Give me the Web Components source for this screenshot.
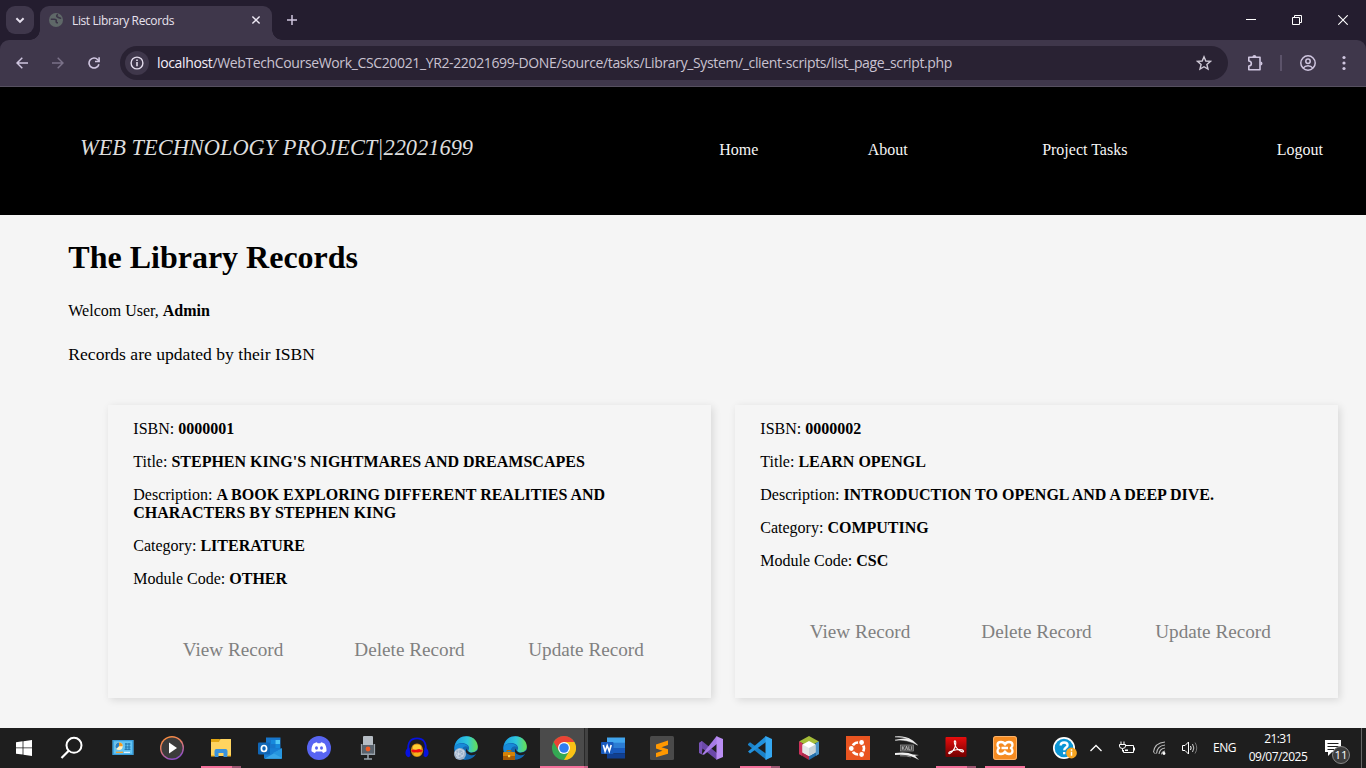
<!DOCTYPE html>
<html lang="en">
<head>
<meta charset="utf-8">
<title>List Library Records</title>
<style>
html,body{margin:0;height:100%;overflow:hidden;background:#f5f5f5}
</style>
</head>
<body>
<desktop-screen></desktop-screen>
<script>
const define = (name, html, init) => customElements.define(name, class extends HTMLElement {
  constructor() {
    super();
    const t = document.createElement('template');
    t.innerHTML = html;
    this.attachShadow({mode: 'open'}).append(t.content.cloneNode(true));
  }
  connectedCallback() { if (init) init(this); }
});

/* Text run stretched with letter-spacing to a given width. */
define('fit-text', `<style>:host{display:inline-block;white-space:pre}span{display:inline-block}</style><span><slot></slot></span>`, el => {
  const s = el.shadowRoot.querySelector('span');
  const n = el.textContent.length;
  const w = s.getBoundingClientRect().width;
  if (w) s.style.letterSpacing = ((+el.getAttribute('w') - w) / n) + 'px';
});

const ICONS = {
  down: ['0 0 28 28', 28, '<path d="M10.4 12.3 14 15.9l3.6-3.6" fill="none" stroke="#e6e0ee" stroke-width="2"/>'],
  globe: ['0 0 14 14', 14, '<circle cx="7" cy="7" r="7" fill="#5f6868"/><path d="M1.800 6.200h3.400c1.800 0 2.400.8 2 2.100-.3 1.200.6 1.400 1.800 1.400M9 1.500C7.400 2.100 7.300 3.500 8.600 4c1.200.5 1.600 1.300 3.600 1.200" fill="none" stroke="#3b3447" stroke-width="1.600"/>'],
  close: ['0 0 10 10', 10, '<path d="M1.4 1.4l7.2 7.2M8.6 1.4 1.4 8.6" stroke="#eee9f5" stroke-width="1.4"/>'],
  plus: ['0 0 12 12', 12, '<path d="M6 1v10M1 6h10" stroke="#d0c6e0" stroke-width="1.5"/>'],
  min: ['0 0 10 10', 10, '<path d="M0 4.5h10" stroke="#fff"/>'],
  restore: ['0 0 10 10', 10, '<path d="M.5 2.5h7v7h-7zM2.5 2.500V.5h7v7H7.500" fill="none" stroke="#fff"/>'],
  wclose: ['0 0 10 10', 10, '<path d="M.3.3l9.400 9.400M9.700.3.3 9.700" stroke="#fff" stroke-width="1.100"/>'],
  back: ['0 0 12 12', 12, '<path d="M12 6H1M6.300.7 1 6l5.300 5.300" fill="none" stroke="#d0c6e0" stroke-width="1.500"/>'],
  fwd: ['0 0 12 12', 12, '<path d="M0 6h11M5.700.7 11 6l-5.300 5.300" fill="none" stroke="#7b7289" stroke-width="1.500"/>'],
  reload: ['0 0 12 12', 12, '<path d="M10.900 7.200A5 5 0 1 1 9.800 2.700L11 4" fill="none" stroke="#d0c6e0" stroke-width="1.600"/><path d="M11.900.2v5H7V3.700h3.300V.2z" fill="#d0c6e0"/>'],
  info: ['0 0 24 24', 24, '<circle cx="12" cy="12" r="12" fill="#3f374b"/><circle cx="12" cy="12" r="5.900" fill="none" stroke="#e3dcec" stroke-width="1.400"/><path d="M12 11v4.300M12 8.400v1.500" stroke="#e3dcec" stroke-width="1.600"/>'],
  star: ['0 0 16 16', 16, '<path d="M8 1.800 9.800 6l4.700.4-3.600 3.100 1.100 4.600L8 11.700l-4 2.400 1.100-4.600L1.500 6.400 6.200 6z" fill="none" stroke="#cfc9d6" stroke-width="1.400"/>'],
  ext: ['0 0 18 18', 18, '<path d="M2.800 3.300H14v12.400H2.800v-3.600c3.400-.2 3.400-4.900 0-5.100z" fill="none" stroke="#d0c6e0" stroke-width="1.600" stroke-linejoin="round"/><path d="M6.400 3a2 2 0 0 1 4 0zM14.500 7.400a2 2 0 0 1 0 4z" fill="#d0c6e0"/>'],
  user: ['0 0 16 16', 16, '<g fill="none" stroke="#d0c6e0" stroke-width="1.500"><circle cx="8" cy="8" r="7.200"/><circle cx="8" cy="6.300" r="2.200"/><path d="M3.200 13.100c2.300-3 7.300-3 9.600 0"/></g>'],
  dots: ['0 0 4 16', 4, '<g fill="#d0c6e0"><circle cx="2" cy="2.500" r="1.600"/><circle cx="2" cy="8" r="1.600"/><circle cx="2" cy="13.500" r="1.600"/></g>'],
  /* taskbar */
  win: ['0 0 24 24', 24, '<path d="M4 6.300 10.600 5.300v6.200H4zM11.400 5.200 20 4v7.500h-8.600zM4 12.300h6.600v6.300L4 17.700zM11.400 12.300H20V20l-8.600-1.200z" fill="#fff"/>'],
  search: ['0 0 24 24', 24, '<circle cx="14" cy="9.300" r="7.500" fill="none" stroke="#fff" stroke-width="2"/><path d="M8.700 14.700 1.500 22" stroke="#fff" stroke-width="2.200"/>'],
  panel: ['0 0 24 24', 24, '<rect x="1.500" y="4" width="21" height="15" fill="#63c3f3"/><rect x="2.200" y="4.700" width="19.600" height="13.600" fill="none" stroke="#2d94d6"/><circle cx="8" cy="10.200" r="3.700" fill="#fff2c7"/><path d="M8 10.200V6.500a3.700 3.700 0 0 0-2.600 6.300z" fill="#2880c5"/><path d="M8 10.200V6.500a3.700 3.700 0 0 1 3.700 3.700z" fill="#f49b1f"/><path d="M14 8h5.500M14 11h5.500M13.500 13.300h6M15 7v7M18 7v7" stroke="#1f74ae"/><path d="M5 16.300h7" stroke="#f5a12d" stroke-width="1.300"/><path d="M13 16.300h6" stroke="#fff"/>'],
  media: ['0 0 24 24', 24, '<defs><linearGradient id="a" x2=".4" y2="1"><stop stop-color="#ff922f"/><stop offset=".5" stop-color="#e77d69"/><stop offset="1" stop-color="#8f4fc5"/></linearGradient></defs><circle cx="12" cy="12" r="12" fill="url(#a)"/><circle cx="12" cy="12" r="10.600" fill="#3c3c3c"/><path d="M9 6.500v11l8-5.500z" fill="#fff"/>'],
  folder: ['0 0 24 24', 24, '<path d="M2 4.500h8l1.500-1.500H22v17H2z" fill="#ffd45f"/><path d="M2 3h9l-1 3H2z" fill="#e4a813"/><path d="M5.500 21v-6q0-2 2-2h9q2 0 2 2v6h-4v-4h-5v4z" fill="#3992dd"/><path d="M2 19h3.500v1.500H2zM18.500 19H22v1.500h-3.500z" fill="#f7b928"/>'],
  outlook: ['0 0 24 24', 24, '<path d="M8 1.500h14.500v13H8z" fill="#1776cb"/><path d="M13 4h4.500v4H13zM17.500 8H22v4h-4.500z" fill="#1689dd"/><path d="M17.500 4H22v4h-4.500z" fill="#50c8f7"/><path d="M6 12l18 .5v9.500q0 .8-1 .8H7q-1 0-1-.8z" fill="#187ed3"/><path d="M6.500 22.700 24 12.500v9.300q0 1-1 1z" fill="#38a6e8"/><path d="M15 17 24 12.500V22z" fill="#2696df"/><rect y="6.500" width="12" height="12" rx="1" fill="#1066b6"/><ellipse cx="6" cy="12.500" rx="2.600" ry="3" fill="none" stroke="#fff" stroke-width="1.700"/>'],
  discord: ['0 0 24 24', 24, '<circle cx="12" cy="12" r="12" fill="#5865f2"/><path d="M8.300 6.700 10 6.300l.5 1h3l.5-1 1.700.4 2 1c1.400 2.300 2 4.500 1.800 7.500-1.200.9-2.200 1.400-3.500 1.800l-.9-1.500H8.900L8 17c-1.300-.4-2.300-.9-3.500-1.800-.2-3 .4-5.200 1.800-7.500z" fill="#fff"/><ellipse cx="9.500" cy="12" rx="1.500" ry="1.700" fill="#5865f2"/><ellipse cx="14.500" cy="12" rx="1.500" ry="1.700" fill="#5865f2"/>'],
  mic: ['0 0 24 24', 24, '<rect x="7" width="10" height="11" rx="1" fill="#b6bdc4"/><path d="M7 9h10v8q0 1-1 1H8q-1 0-1-1z" fill="#59636e"/><path d="M5.700 8v10.300h12.600V8" fill="none" stroke="#98a2ab" stroke-width="1.600"/><circle cx="12" cy="13" r="2.400" fill="#f15a22"/><path d="M12 19v4M8 23h8" stroke="#98a2ab" stroke-width="1.600"/>'],
  audacity: ['0 0 24 24', 24, '<path d="M5.800 14.500Q6.500 7.500 12 7.500t6.200 7q-1 6.500-6.200 6.500t-6.200-6.500z" fill="#d98a14"/><ellipse cx="12" cy="12" rx="4.300" ry="3.400" fill="#ffd034"/><ellipse cx="12" cy="18" rx="3.500" ry="2" fill="#f3b41e"/><path d="M5.800 15q2-1.800 3.200-1.400 1.400.5 3 0 2-1.200 3-.4t3.200 1.500q-2.200 1.600-4 1.200-1.600.9-3 .4-3 .6-5.400-1.300z" fill="#f10b12"/><path d="M3.200 14Q2.500 2.300 12 2.300T20.800 14" fill="none" stroke="#0712df" stroke-width="1.800"/><path d="M.5 16Q1 12 4.500 11.500l1 8.500-2 1.200Q0 20 .5 16zM23.500 16Q23 12 19.500 11.500l-1 8.500 2 1.200q3.500-1.200 3-5.200z" fill="#0712df"/>'],
  edge: ['0 0 24 24', 24, '<defs><linearGradient id="b"><stop stop-color="#1b9de2"/><stop offset=".55" stop-color="#30c8dc"/><stop offset="1" stop-color="#68df4e"/></linearGradient></defs><circle cx="12" cy="12" r="11.700" fill="#1268b2"/><path d="M.5 11C2 3 7 .2 12.500.2 20 .2 24 6 23.800 11c-.2 4.500-5 6-8 5.200-2-.6-1.800-1.500-.8-3.200C16 9 11 6.500 7 7Q2.500 7.500.5 11z" fill="url(#b)"/><path d="M.5 11C4 6 12 6.500 14 11q-4-2-6 2-2 6 4 10.500Q-.5 23 .5 11z" fill="#178ad9"/><path d="M12.500 12.500q-2 5 3.500 6.500 4 .8 7.500-1.500l.5.500V14q-4 3.500-8 2.500-3-.8-3.500-4z" fill="#1e1e1e"/>'],
  ball: ['0 0 24 24', 24, '<circle cx="6" cy="18" r="6" fill="#9eb2ca"/><path d="M1 16l4-3 5 2-1 5-5 2zM5 13l-1 9M1 16l8 4M10 15l-8 5" fill="none" stroke="#dbe4ef" stroke-width=".6"/>'],
  brief: ['0 0 24 24', 24, '<rect y="16" width="12" height="8" rx=".8" fill="#d48208"/><path d="M4 16v-1.500h4V16" fill="none" stroke="#b76a05"/><path d="M0 20h12v4H0z" fill="#a65a05"/><rect x="5" y="19" width="2.200" height="2.200" fill="#ffd24a"/>'],
  chrome: ['0 0 24 24', 24, '<circle cx="12" cy="12" r="12" fill="#34a853"/><path d="M1.600 6A12 12 0 0 1 22.400 6H12L7 15z" fill="#ea4335"/><path d="M12 6H22.400A12 12 0 0 1 12 24L17.200 15z" fill="#fbc116"/><circle cx="12" cy="12" r="6" fill="#fff"/><circle cx="12" cy="12" r="4.800" fill="#2f7df1"/>'],
  word: ['0 0 24 24', 24, '<path d="M6 1.500h18V7H6z" fill="#41a5ee"/><path d="M6 6.700h18V12H6z" fill="#2b7cd3"/><path d="M6 12h18v5.300H6z" fill="#185abd"/><path d="M6 17.300h18v5.200H6z" fill="#103f91"/><rect y="6" width="12.500" height="12" rx="1" fill="#185abd"/><path d="M2.300 9l1.800 6.300L6.200 9.500l2.100 5.800L10.200 9" fill="none" stroke="#fff" stroke-width="1.600"/>'],
  sublime: ['0 0 24 24', 24, '<rect width="24" height="24" rx="1.500" fill="#4a4a4a"/><path d="M6 8.500 18 4.500V9l-6.500 2.200L18 13.300v4.500L6 21.200V17l6.500-2.200L6 12.500z" fill="#ff9800"/>'],
  vs: ['0 0 24 24', 24, '<path d="M0 7 3 5 18 17v7L3.500 12.500 3 16.500 0 17z" fill="#6b49a9"/><path d="M0 7 3 5v13.500L0 17z" fill="#7953b8"/><path d="M3 18.500 17.500.3 19 1v6L5 18.700z" fill="#a77be6"/><path d="M17.500.3 24 3v18l-6.500 2.700z" fill="#b98df2"/>'],
  code: ['0 0 24 24', 24, '<path d="M0 8l2-1.800L18.500 18v6L0 9z" fill="#1b82c9"/><path d="M0 15.500 18 0v6L2 17.500z" fill="#2291dc"/><path d="M17.500 0 24 3v18l-6.500 3z" fill="#35a8f2"/>'],
  netbeans: ['0 0 24 24', 24, '<path d="M12 0 22 5.500 12 11 2 5.500z" fill="#a4bc37"/><path d="M2 5.500 12 11v13L2 18z" fill="#ae294b"/><path d="M22 5.500 12 11v13l10-6z" fill="#2370ac"/><path d="M2 5.500l3 1.600V19.700L2 18z" fill="#cd315b"/><path d="M22 5.500 19 7v12.700l3-1.700z" fill="#4c94c9"/><path d="M12 5l6.500 3.500v8L12 20l-6.500-3.500v-8z" fill="#fff"/><path d="M5.500 8.500 12 12v8l-6.500-3.500z" fill="#e2e7e7"/><path d="M12 12l6.500-3.500v8L12 20z" fill="#c7d2d7"/>'],
  ubuntu: ['0 0 24 24', 24, '<rect width="24" height="24" fill="#e95420"/><circle cx="12" cy="12.500" r="6" fill="none" stroke="#fff" stroke-width="2.600"/><g fill="#fff" stroke="#e95420" stroke-width="1.200"><circle cx="5.300" cy="12.500" r="3"/><circle cx="15.600" cy="6.500" r="3"/><circle cx="15.600" cy="18.500" r="3"/></g>'],
  kali: ['0 0 24 24', 24, '<path d="M0 .8Q14-.8 22.500 9 12 3 0 4.200 9 2.200 14 3.200 8 .8 0 .8z" fill="#f0f0f0" stroke="#f0f0f0" stroke-width=".5"/><rect x="5.500" y="9" width="13" height="6" fill="#444" stroke="#aaa" stroke-width=".6"/><path d="M7.300 10.200v3.600M9.600 10.200l-2 1.800 2 1.800M10.500 13.800l1-3.600 1.100 3.600M13.800 10.200v3.600h1.600M16.700 10.200v3.600" fill="none" stroke="#ddd" stroke-width=".7"/><path d="M0 17Q12 15.500 18 18.500l6 .5-4 .7 4 4.300Q14 17.500 0 19z" fill="#f0f0f0"/><path d="M5 19.800q7-.3 11 1.200" fill="none" stroke="#bbb" stroke-width=".7"/>'],
  pdf: ['0 0 24 24', 24, '<defs><linearGradient id="c" x2="0" y2="1"><stop stop-color="#e80d0d"/><stop offset="1" stop-color="#730000"/></linearGradient></defs><rect x="1.500" y="1" width="21" height="20" rx="1" fill="url(#c)"/><path d="M10.500 5c1.800-.8 1.500 3 .5 6S6.500 18.300 5 17.500s3-3 7.500-3.700 7.500.4 7 1.700-4.500-.5-6.800-3.500-2.700-6.500-2.200-7z" fill="none" stroke="#fff" stroke-width="1.100"/>'],
  xampp: ['0 0 24 24', 24, '<rect width="24" height="24" rx="3" fill="#f58b21"/><rect x=".5" y=".5" width="23" height="23" rx="2.500" fill="none" stroke="#fbb269"/><path d="M12 8.500Q11 6 8 6 4.500 6 4.500 9q0 2 1.700 3-1.700 1-1.700 3 0 3 3.500 3 3 0 4-2.500 1 2.500 4 2.500 3.500 0 3.500-3 0-2-1.700-3 1.700-1 1.700-3 0-3-3.500-3-3 0-4 2.500zM8.500 12h6.500" fill="none" stroke="#fff" stroke-width="2.300" stroke-linejoin="round"/>'],
  help: ['0 0 24 24', 24, '<circle cx="11" cy="12" r="11" fill="#fff"/><circle cx="11" cy="12" r="9.300" fill="#0c96d5"/><path d="M7.600 9.500q.2-3 3.500-3 3.500 0 3.500 2.700c0 2.300-3.400 2.300-3.400 5M11.200 16v2.200" fill="none" stroke="#fff" stroke-width="2.300"/><circle cx="18.500" cy="17" r="5.400" fill="#f7a521"/><path d="M18.500 15.800v4M18.500 13.300v1.500" stroke="#fff" stroke-width="1.500"/>'],
  up: ['0 0 12 12', 12, '<path d="M.5 9 6 3.500 11.500 9" fill="none" stroke="#fff" stroke-width="1.300"/>'],
  batt: ['0 0 18 14', 18, '<path d="M7.500 4.500H15.500v7h-10V9M16.500 6.500v3M3 .5v3M6 .5v3M1.500 3.500h6V5q0 2.500-3 2.500T1.500 5zM4.500 7.500v3" fill="none" stroke="#fff"/><path d="M7 8.500h3V10H7z" fill="#fff"/>'],
  wifi: ['0 0 16 16', 16, '<g fill="none" stroke="#bbb" stroke-width="1.100"><path d="M1.500 12Q2.500 3 13 2M4.500 13.500Q5 6 13 5M7 14Q7.500 8.800 13 8M9.500 14.300Q10 11.500 13 11"/></g><circle cx="12" cy="13.500" r="1.400" fill="#fff"/><path d="M1.500 12l2 2" stroke="#bbb"/>'],
  vol: ['0 0 18 16', 18, '<g fill="none" stroke="#fff"><path d="M1.500 5.500h2.500L7.500 2v12L4 10.500H1.500z"/><path d="M9.500 6q1.300 2 0 4"/><path d="M11.500 4q2.700 4 0 8" stroke="#ccc"/><path d="M14 2.500q3.500 5.500 0 11" stroke="#777"/></g>'],
  note: ['0 0 18 18', 18, '<path d="M1 1h16v12H8l-4 4v-4H1z" fill="#fff"/><path d="M3.500 4.500h11M3.500 7.500h11M3.500 10.500h7" stroke="#1e1e1e"/>']
};
define('line-icon', `<style>:host{display:block;flex:none;line-height:0}svg{display:block}</style><div></div>`, el => {
  const [vb, w, body] = ICONS[el.getAttribute('name')];
  const [, , a, b] = vb.split(' ').map(Number);
  el.shadowRoot.querySelector('div').innerHTML = `<svg viewBox="${vb}" width="${w}" height="${w * b / a}">${body}</svg>`;
});

define('tab-strip', `<style>
:host{display:flex;height:40px;background:#241d2f;font:12px "Open Sans",sans-serif;color:#e8e2ee}
.drop{width:28px;height:28px;margin:6px 6px 0;border-radius:9px;background:#3f374b}
.tab{position:relative;display:flex;align-items:center;box-sizing:border-box;width:232px;height:34px;margin-top:6px;padding:0 11px 6px 9px;border-radius:9px 9px 0 0;background:#3f374b}
.tab:before,.tab:after{content:"";position:absolute;bottom:0;width:10px;height:10px;background:radial-gradient(circle at 0 0,transparent 9.500px,#3f374b 10px)}
.tab:before{left:-10px}.tab:after{right:-10px;transform:scaleX(-1)}
fit-text{margin-left:9px;flex:1}
.plus{margin:14px 0 0 14px}
.win{margin-left:auto;display:flex;align-items:center}
.win div{width:46px;display:flex;justify-content:center}
</style><line-icon class="drop" name="down"></line-icon><div class="tab"><line-icon name="globe"></line-icon><fit-text w="102">List Library Records</fit-text><line-icon name="close"></line-icon></div><line-icon class="plus" name="plus"></line-icon>
<div class="win"><div><line-icon name="min"></line-icon></div><div><line-icon name="restore"></line-icon></div><div><line-icon name="wclose"></line-icon></div></div>`);

define('tool-bar', `<style>
:host{display:block;background:#241d2f}
.bar{display:flex;align-items:center;box-sizing:border-box;height:47px;padding:0 20px 1px 16px;background:#3f374b;border-bottom:1px solid #565060;border-radius:9px 9px 0 0}
.n{margin-right:24px}.r{margin-right:20px}
.url{flex:1;display:flex;align-items:center;box-sizing:border-box;height:34px;padding:0 16px 0 5px;border-radius:17px;background:#292233;font:14px "Open Sans",sans-serif;color:#c9c2d1}
.url fit-text{margin-left:8px;flex:1}
b{font-weight:400;color:#f3eef8}
.ext{margin-left:18px}.sep{width:2px;height:16px;margin:0 18px 0 16px;background:#5c536a}.dots{margin-left:26px}
</style><div class="bar"><line-icon class="n" name="back"></line-icon><line-icon class="n" name="fwd"></line-icon><line-icon class="r" name="reload"></line-icon>
<div class="url"><line-icon name="info"></line-icon><fit-text w="795"><b>localhost</b>/WebTechCourseWork_CSC20021_YR2-22021699-DONE/source/tasks/Library_System/_client-scripts/list_page_script.php</fit-text><line-icon name="star"></line-icon></div>
<line-icon class="ext" name="ext"></line-icon><div class="sep"></div><line-icon name="user"></line-icon><line-icon class="dots" name="dots"></line-icon></div>`);

define('site-header', `<style>
:host{display:flex;height:128px;box-sizing:border-box;padding:48px 43px 0 80px;background:#000;justify-content:space-between;align-items:flex-start}
em{font-size:22.400px;line-height:26px;color:#ddd}
nav{display:flex;font-size:16px;line-height:18px;color:#f5f5f5;padding-top:6px}
span{margin-left:var(--g)}
</style><em>WEB TECHNOLOGY PROJECT|22021699</em><nav><span>Home</span><span style="--g:109.400px">About</span><span style="--g:134.500px">Project Tasks</span><span style="--g:149.400px">Logout</span></nav>`);

define('record-card', `<style>
:host{display:block;box-sizing:border-box;padding:15px 25px;background:#f5f5f5;box-shadow:2px 2px 8px rgba(0,0,0,.12);font-size:16px;line-height:18px}
::slotted(p){margin:0 0 15px!important;padding-left:.3px}
.act{display:grid;grid-template-columns:repeat(3,176.500px);justify-content:center;margin-top:51px;text-align:center;font-size:19.200px;line-height:22px;color:#808080}
</style><slot></slot><div class="act"><span>View Record</span><span>Delete Record</span><span>Update Record</span></div>`);

define('library-page', `<style>
:host{display:block;flex:1;background:#f5f5f5;color:#000;font-family:"Liberation Serif",serif;min-height:0}
main{padding:0 28px 0 68px}
h1{margin:0;padding:24px 0 0 .3px;font-size:32px;line-height:37px}
.w{margin:26px 0 0;padding-left:.3px;font-size:16px;line-height:18px}
.i{margin:24px 0 0;padding-left:.3px;font-size:17.600px;line-height:20px}
.g{display:grid;grid-template-columns:1fr 1fr;gap:24px;height:293px;margin:41px 0 0 40px}
</style><site-header></site-header><main><h1>The Library Records</h1><p class="w">Welcom User, <b>Admin</b></p><p class="i">Records are updated by their ISBN</p>
<div class="g"><record-card><p>ISBN: <b>0000001</b></p><p>Title: <b>STEPHEN KING'S NIGHTMARES AND DREAMSCAPES</b></p><p>Description: <b>A BOOK EXPLORING DIFFERENT REALITIES AND CHARACTERS BY STEPHEN KING</b></p><p>Category: <b>LITERATURE</b></p><p>Module Code: <b>OTHER</b></p></record-card>
<record-card><p>ISBN: <b>0000002</b></p><p>Title: <b>LEARN OPENGL</b></p><p>Description: <b>INTRODUCTION TO OPENGL AND A DEEP DIVE.</b></p><p>Category: <b>COMPUTING</b></p><p>Module Code: <b>CSC</b></p></record-card></div></main>`);

/* One taskbar button: state is "open", "one" or "active"; over is a small overlay icon. */
define('task-item', `<style>
:host{position:relative;display:flex;flex:none;width:49px;height:40px;align-items:center;justify-content:center}
:host([name=win]){width:48px}
:host([name=search]){width:50.500px;box-sizing:border-box;padding-right:2.500px}
:host([state]):after{content:"";position:absolute;left:4.500px;bottom:0;width:40px;height:2px;background:linear-gradient(90deg,#f4709b 31px,#9b5470 31px)}
:host([state=one]):after{background:#f4709b}
:host([state=active]){background:linear-gradient(90deg,transparent .5px,#4b4b4b .5px,#4b4b4b 44.500px,#292929 44.500px,#292929 45.500px,#424242 45.500px,#424242 48.500px,transparent 48.500px)}
:host([state=active]):after{left:.5px;width:48px;background:linear-gradient(90deg,#f4709b 44px,#c9648a 44px)}
.o{position:absolute;left:12.500px;top:8px}
</style>`, el => {
  const add = (name, cls) => {
    const i = document.createElement('line-icon');
    i.setAttribute('name', name);
    i.className = cls;
    el.shadowRoot.append(i);
  };
  add(el.getAttribute('name'), '');
  if (el.hasAttribute('over')) add(el.getAttribute('over'), 'o');
});

const TASKS = [['win'],['search'],['panel'],['media'],['folder','open'],['outlook'],['discord'],['mic'],['audacity'],['edge','','ball'],['edge','','brief'],['chrome','active'],['word'],['sublime'],['vs'],['code','open'],['netbeans'],['ubuntu'],['kali'],['pdf','open'],['xampp','one']]
  .map(([n, s, o]) => `<task-item name="${n}"${s ? ` state="${s}"` : ''}${o ? ` over="${o}"` : ''}></task-item>`).join('');

define('task-bar', `<style>
:host{position:relative;display:flex;height:40px;background:#1e1e1e;color:#fff;font:12px/18px "Open Sans",sans-serif}
.tray{display:flex;margin-left:auto}
.tray>div{position:relative;display:flex;align-items:center;justify-content:center;width:var(--w)}
.tray .time{flex-direction:column}
.badge{position:absolute;left:21px;top:18px;box-sizing:border-box;width:18px;height:18px;border-radius:50%;border:1px solid #888;background:#3d3d3d;font-size:11.500px;line-height:16px;text-align:center}
.tray .peek{box-sizing:border-box;width:5px;border-left:1px solid #666}
</style>${TASKS}<div class="tray">
<div style="--w:34px"><line-icon name="help"></line-icon></div><div style="--w:28px"><line-icon name="up"></line-icon></div><div style="--w:34px"><line-icon name="batt"></line-icon></div><div style="--w:32px"><line-icon name="wifi"></line-icon></div><div style="--w:28px"><line-icon name="vol"></line-icon></div><div style="--w:41px"><fit-text w="23">ENG</fit-text></div>
<div class="time" style="--w:66px"><fit-text w="27.500">21:31</fit-text><fit-text w="58.500">09/07/2025</fit-text></div>
<div style="--w:50px"><line-icon name="note" style="margin-right:6px"></line-icon><span class="badge">11</span></div><div class="peek"></div></div>`);

define('desktop-screen', `<style>:host{display:flex;flex-direction:column;width:1366px;height:768px;overflow:hidden}</style>
<tab-strip></tab-strip><tool-bar></tool-bar><library-page></library-page><task-bar></task-bar>`);
</script>
</body>
</html>
